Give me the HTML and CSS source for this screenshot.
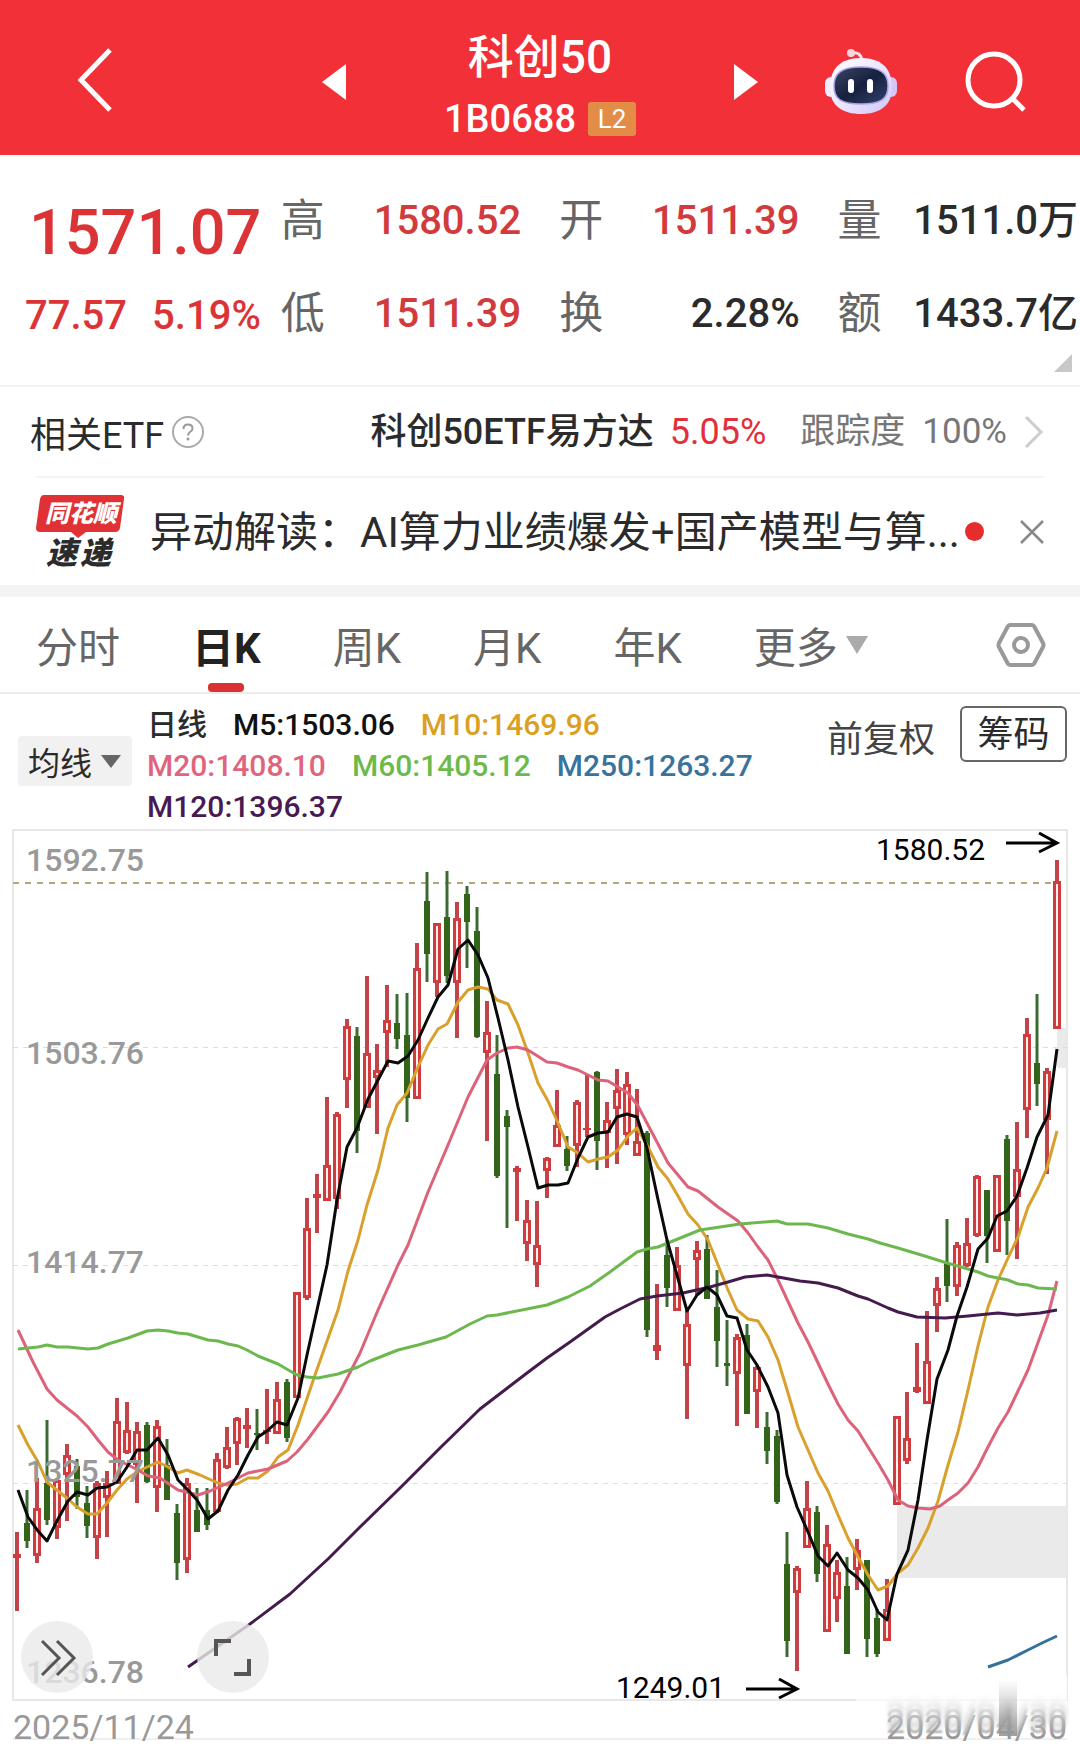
FILE: index.html
```html
<!DOCTYPE html>
<html lang="zh-CN">
<head>
<meta charset="utf-8">
<meta name="viewport" content="width=device-width, initial-scale=1">
<title>科创50 1B0688</title>
<link rel="stylesheet" href="styles.css">
</head>
<body>

<header class="topbar">
  <div class="topbar-left">
    <button class="icon-btn" type="button" aria-label="返回">
      <svg width="36" height="64" viewBox="0 0 36 64"><path d="M33 2 L4 32 L33 62" fill="none" stroke="#fff" stroke-width="5"/></svg>
    </button>
  </div>
  <div class="topbar-center">
    <button class="icon-btn" type="button" aria-label="上一个">
      <svg width="24" height="36" viewBox="0 0 24 36"><path d="M24 0 V36 L0 18 Z" fill="#fff"/></svg>
    </button>
    <div class="title">
      <h1>科创50</h1>
      <p>1B0688 <span class="level">L2</span></p>
    </div>
    <button class="icon-btn" type="button" aria-label="下一个">
      <svg width="24" height="36" viewBox="0 0 24 36"><path d="M0 0 V36 L24 18 Z" fill="#fff"/></svg>
    </button>
  </div>
  <div class="topbar-right">
    <button class="icon-btn" type="button" aria-label="智能助手">
      <svg width="72" height="68" viewBox="0 0 72 68">
        <defs>
          <linearGradient id="shell" x1="0" y1="0" x2="1" y2="1">
            <stop offset="0" stop-color="#fff"/>
            <stop offset="0.5" stop-color="#ece6ff"/>
            <stop offset="1" stop-color="#cfc6f6"/>
          </linearGradient>
          <linearGradient id="face" x1="0" y1="0" x2="1" y2="1">
            <stop offset="0" stop-color="#3c4664"/>
            <stop offset="0.5" stop-color="#16213f"/>
            <stop offset="1" stop-color="#34426a"/>
          </linearGradient>
        </defs>
        <path d="M26 5 Q36 3 37 13" fill="none" stroke="#fbdfe8" stroke-width="3"/>
        <circle cx="26" cy="5" r="4" fill="#fbd7dc"/>
        <rect x="0" y="29" width="12" height="20" rx="6" fill="#f3ecff"/>
        <rect x="60" y="29" width="12" height="20" rx="6" fill="#d5c6f6"/>
        <path d="M36 10 C58 10 67 22 67 40 C67 58 54 66 36 66 C18 66 5 58 5 40 C5 22 14 10 36 10 Z" fill="url(#shell)"/>
        <path d="M36 19 C55 19 63 25 63 38 C63 51 56 56 36 56 C16 56 9 51 9 38 C9 25 17 19 36 19 Z" fill="url(#face)" stroke="#a9a0e6" stroke-width="1.500"/>
        <rect x="23" y="31" width="6" height="14" rx="3" fill="#fff"/>
        <rect x="42" y="31" width="6" height="14" rx="3" fill="#fff"/>
      </svg>
    </button>
    <button class="icon-btn" type="button" aria-label="搜索">
      <svg width="62" height="62" viewBox="0 0 62 62"><circle cx="29" cy="29" r="26" fill="none" stroke="#fff" stroke-width="5"/><path d="M48 48 L59 59" stroke="#fff" stroke-width="5"/></svg>
    </button>
  </div>
</header>

<section class="quote">
  <div class="price">
    <strong>1571.07</strong>
    <div class="change"><span>77.57</span><span>5.19%</span></div>
  </div>
  <dl class="stats">
    <div><dt>高</dt><dd class="up">1580.52</dd></div>
    <div><dt>开</dt><dd class="up">1511.39</dd></div>
    <div><dt>量</dt><dd>1511.0万</dd></div>
    <div><dt>低</dt><dd class="up">1511.39</dd></div>
    <div><dt>换</dt><dd>2.28%</dd></div>
    <div><dt>额</dt><dd>1433.7亿</dd></div>
  </dl>
  <svg class="expand" width="18" height="18" viewBox="0 0 18 18"><path d="M18 0 V18 H0 Z" fill="#c8c8c8"/></svg>
</section>

<section class="etf">
  <span class="etf-label">相关ETF</span>
  <svg width="32" height="32" viewBox="0 0 32 32"><circle cx="16" cy="16" r="15" fill="none" stroke="#aaa" stroke-width="2"/><path d="M11.500 13 Q11.500 8.500 16 8.500 Q20.500 8.500 20.500 12.500 Q20.500 14.500 18 16 Q16 17.300 16 19.500" fill="none" stroke="#999" stroke-width="2"/><circle cx="16" cy="23" r="1.500" fill="#999"/></svg>
  <a class="etf-link" href="#">
    <b>科创50ETF易方达</b>
    <span class="etf-rate">5.05%</span>
    <span class="etf-track">跟踪度</span>
    <span class="etf-track">100%</span>
    <svg width="20" height="34" viewBox="0 0 20 34"><path d="M2 2 L17 17 L2 32" fill="none" stroke="#ccc" stroke-width="3"/></svg>
  </a>
</section>

<section class="news">
  <svg class="news-logo" width="90" height="74" viewBox="0 0 90 74">
    <path d="M8 0 H85 Q89 0 88 4 L84 33 Q83 37 79 37 H50 L42 43 L35 37 H4 Q0 37 0 33 L4 4 Q5 0 8 0 Z" fill="#e03234"/>
    <text x="9" y="27" font-size="24" fill="#fff">同花顺</text>
    <text x="10" y="69" font-size="31" fill="#2b2b2b">速</text>
    <text x="44" y="69" font-size="31" fill="#2b2b2b">递</text>
  </svg>
  <a class="news-text" href="#">异动解读：AI算力业绩爆发+国产模型与算...</a>
  <i class="dot"></i>
  <button class="icon-btn" type="button" aria-label="关闭">
    <svg width="24" height="24" viewBox="0 0 24 24"><path d="M1 1 L23 23 M23 1 L1 23" stroke="#888" stroke-width="2.500"/></svg>
  </button>
</section>

<nav class="tabs">
  <button type="button">分时</button>
  <button type="button" class="active">日K</button>
  <button type="button">周K</button>
  <button type="button">月K</button>
  <button type="button">年K</button>
  <button type="button" class="more">更多<svg width="22" height="18" viewBox="0 0 22 18"><path d="M0 0 H22 L11 18 Z" fill="#aaa"/></svg></button>
  <button type="button" class="settings" aria-label="设置">
    <svg width="50" height="46" viewBox="0 0 50 46"><path d="M14 3 H36 Q37.500 3 38.500 5 L47 21 Q48 23 47 25 L38.500 41 Q37.500 43 36 43 H14 Q12.500 43 11.500 41 L3 25 Q2 23 3 21 L11.500 5 Q12.500 3 14 3 Z" fill="none" stroke="#999" stroke-width="4"/><circle cx="25" cy="23" r="7" fill="none" stroke="#999" stroke-width="4"/></svg>
  </button>
</nav>

<section class="indicator">
  <button type="button" class="ma-btn">均线<svg width="20" height="13" viewBox="0 0 20 13"><path d="M0 0 H20 L10 13 Z" fill="#666"/></svg></button>
  <ul class="legend">
    <li class="day">日线</li>
    <li class="m5">M5:1503.06</li>
    <li class="m10">M10:1469.96</li>
    <li class="m20">M20:1408.10</li>
    <li class="m60">M60:1405.12</li>
    <li class="m250">M250:1263.27</li>
    <li class="m120">M120:1396.37</li>
  </ul>
  <button type="button" class="adjust">前复权</button>
  <button type="button" class="chips">筹码</button>
</section>

<figure class="chart">
  <svg id="kline" viewBox="0 830 1080 870" role="img" aria-label="日K线图">
    <g fill="#eaeaea">
      <rect x="897" y="1506" width="170" height="72"/>
      <rect x="1057" y="1028" width="10" height="40"/>
    </g>
    <rect x="13" y="830" width="1054" height="870" fill="none" stroke="#e8e8e8" stroke-width="2"/>
    <g stroke="#dcdcdc" stroke-dasharray="5 5">
      <path d="M13 1047.500 H1067"/>
      <path d="M13 1265.500 H1067"/>
      <path d="M13 1483.500 H1067"/>
    </g>
    <path d="M13 883 H1054" stroke="#b5a878" stroke-width="2" stroke-dasharray="6 6"/>
    <g id="candles"></g>
    <g id="averages" fill="none" stroke-width="3" stroke-linejoin="round"></g>
    <g class="scale">
      <text x="26" y="871">1592.75</text>
      <text x="26" y="1064">1503.76</text>
      <text x="26" y="1273">1414.77</text>
      <text x="26" y="1482">1325.77</text>
      <text x="26" y="1683">1236.78</text>
    </g>
    <g class="mark">
      <text x="876" y="860">1580.52</text>
      <text x="616" y="1698">1249.01</text>
    </g>
    <g fill="none" stroke="#000" stroke-width="3">
      <path d="M1006 843 H1056 M1039 833 L1057 843 L1039 852"/>
      <path d="M746 1689 H796 M779 1679 L797 1689 L779 1698"/>
    </g>
  </svg>
  <div class="chart-tools">
    <button type="button" aria-label="展开">
      <svg width="72" height="72" viewBox="0 0 72 72"><path d="M21 20 L38 37 L21 54 M36 20 L53 37 L36 54" fill="none" stroke="#555" stroke-width="3"/></svg>
    </button>
    <button type="button" aria-label="全屏">
      <svg width="72" height="72" viewBox="0 0 72 72"><path d="M19 35 V20 H34 M52 38 V53 H37" fill="none" stroke="#555" stroke-width="4"/></svg>
    </button>
  </div>
</figure>

<footer class="dates">
  <span>2025/11/24</span>
  <span class="fading">2020/04/30</span>
</footer>

<script src="chart.js"></script>
</body>
</html>
```
FILE: styles.css
```css
* {
  box-sizing: border-box;
}

body {
  margin: 0;
  background: #fff;
  color: #2b2b2b;
  font-family: Roboto, "Noto Sans CJK SC", sans-serif;
  overflow-x: hidden;
}

button {
  margin: 0;
  padding: 0;
  border: 0;
  background: none;
  color: inherit;
  font: inherit;
}

a {
  color: inherit;
  text-decoration: none;
}

svg {
  display: block;
  flex: none;
}

h1, p, dl, dd, ul, figure {
  margin: 0;
  padding: 0;
}

/* top bar */
.topbar {
  display: grid;
  grid-template-columns: 1fr auto 1fr;
  align-items: center;
  height: 155px;
  padding-top: 9px;
  background: #f23037;
  color: #fff;
}

.topbar-left {
  padding-left: 77px;
}

.topbar-center {
  display: flex;
  align-items: center;
  justify-content: space-between;
  width: 436px;
}

.topbar-right {
  display: flex;
  align-items: center;
  justify-content: flex-end;
  gap: 68px;
  padding-right: 53px;
}

.title {
  padding-top: 10px;
  text-align: center;
}

.title h1 {
  font-size: 46px;
  font-weight: 500;
  line-height: 64px;
}

.title p {
  display: flex;
  align-items: center;
  gap: 12px;
  font-size: 38px;
  font-weight: 500;
  line-height: 60px;
}

.level {
  width: 48px;
  background: #e28c48;
  border-radius: 3px;
  font-size: 26px;
  font-weight: 400;
  line-height: 34px;
}

/* quote */
.quote {
  position: relative;
  display: flex;
  height: 232px;
  padding-top: 19px;
  border-bottom: 2px solid #f3f3f3;
}

.price {
  width: 26%;
  padding-left: 25px;
  color: #dc3336;
}

.price strong {
  display: block;
  padding-left: 4px;
  font-size: 63px;
  font-weight: 500;
  line-height: 118px;
}

.change {
  display: flex;
  gap: 25px;
  font-size: 40px;
  font-weight: 500;
  line-height: 48px;
}

.stats {
  flex: 1;
  display: grid;
  grid-template-columns: repeat(3, 1fr);
  grid-auto-rows: 93px;
  column-gap: 38px;
  padding-right: 2px;
}

.stats div {
  display: flex;
  align-items: center;
  justify-content: space-between;
  line-height: 60px;
}

.stats dt {
  color: #666;
  font-size: 44px;
}

.stats dd {
  font-size: 40px;
  font-weight: 500;
}

.stats .up {
  color: #d33a3c;
}

.expand {
  position: absolute;
  right: 8px;
  bottom: 13px;
}

/* related etf */
.etf {
  display: flex;
  align-items: center;
  height: 91px;
  margin: 0 36px;
  border-bottom: 2px solid #f3f3f3;
  font-size: 36px;
}

.etf-label {
  margin: 0 8px 0 -6px;
}

.etf-link {
  display: flex;
  align-items: center;
  margin-left: auto;
  line-height: 56px;
}

.etf-link b {
  font-weight: 500;
}

.etf-rate {
  margin: 0 34px 0 16px;
  color: #e0303c;
}

.etf-track {
  margin-right: 17px;
  color: #777;
  font-size: 35px;
}

/* news */
.news {
  display: flex;
  align-items: center;
  height: 119px;
  padding: 0 36px;
  border-bottom: 12px solid #f4f4f4;
}

.news-logo {
  overflow: visible;
  font-weight: 900;
  font-style: italic;
}

.news-text {
  flex: 1;
  margin-left: 24px;
  padding-top: 3px;
  font-size: 42px;
  line-height: 62px;
  white-space: nowrap;
}

.dot {
  flex: none;
  width: 19px;
  height: 19px;
  margin: 0 36px 0 5px;
  border-radius: 50%;
  background: #e52d2e;
}

/* period tabs */
.tabs {
  display: flex;
  gap: 72px;
  height: 97px;
  padding: 0 34px 0 36px;
  border-bottom: 2px solid #ececec;
  color: #666;
  font-size: 42px;
}

.tabs button {
  display: flex;
  align-items: center;
}

.tabs .active {
  position: relative;
  color: #222;
  font-weight: 700;
}

.tabs .active::after {
  content: "";
  position: absolute;
  left: 16px;
  bottom: 0;
  width: 36px;
  height: 9px;
  border-radius: 4px;
  background: #dc3033;
}

.tabs .more {
  gap: 8px;
}

.tabs .settings {
  margin-left: auto;
}

/* indicator legend */
.indicator {
  display: flex;
  align-items: flex-start;
  height: 136px;
  padding: 10px 13px 0 18px;
}

.ma-btn {
  display: flex;
  align-items: center;
  gap: 9px;
  width: 114px;
  height: 50px;
  margin-top: 32px;
  padding-left: 10px;
  border-radius: 4px;
  background: #f1f1f1;
  font-size: 32px;
}

.legend {
  display: flex;
  flex-wrap: wrap;
  column-gap: 26px;
  flex: 1;
  margin-left: 15px;
  padding-right: 60px;
  list-style: none;
  font-size: 30px;
  font-weight: 500;
  line-height: 41px;
}

.m5 { color: #111; }
.m10 { color: #dba021; }
.m20 { color: #e0657c; }
.m60 { color: #6cba4b; }
.m250 { color: #37739c; }
.m120 { color: #481a54; }

/* the first row holds three entries only */
.m10 {
  margin-right: 100px;
}

.adjust {
  margin-right: 25px;
  color: #444;
  font-size: 36px;
  line-height: 72px;
}

.chips {
  width: 107px;
  height: 56px;
  margin-top: 2px;
  border: 2px solid #666;
  border-radius: 6px;
  font-size: 36px;
  line-height: 54px;
}

/* chart */
.chart {
  position: relative;
}

#kline {
  width: 100%;
  height: auto;
  overflow: visible;
}

.scale {
  fill: #999;
  font-size: 32px;
  font-weight: 500;
}

.mark {
  fill: #000;
  font-size: 30px;
}

.chart-tools {
  position: absolute;
  left: 21px;
  bottom: 7px;
  display: flex;
  gap: 104px;
}

.chart-tools button {
  border-radius: 50%;
  background: rgba(234, 234, 234, 0.8);
}

.dates {
  display: flex;
  justify-content: space-between;
  height: 48px;
  padding: 0 13px;
  color: #999;
  font-size: 34px;
  line-height: 54px;
  background: linear-gradient(#f0f0f0, #f0f0f0) 13px 38px / 1054px 2px no-repeat;
}

.fading {
  position: relative;
  text-shadow: 0 -6px 2px #aaa, 0 -12px 4px #bbb, 0 -18px 5px #ddd;
}

.fading::before {
  content: "";
  position: absolute;
  inset: -24px 0 12px -30px;
  background: linear-gradient(rgba(255, 255, 255, 0.9) 20%, rgba(255, 255, 255, 0));
}

.fading::after {
  content: "";
  position: absolute;
  right: 50px;
  top: -20px;
  width: 18px;
  height: 56px;
  background: linear-gradient(rgba(150, 150, 150, 0), rgba(150, 150, 150, 0.9));
}
```
FILE: chart.js
```js
// One row per day: high, body top, body bottom, low, 1 = up / 0 = down
var days = [
  [1532,1554,1558,1611,1], [1490,1523,1541,1548,0], [1478,1508,1556,1563,1], [1420,1483,1520,1525,0],
  [1478,1480,1528,1539,1], [1444,1455,1475,1521,1], [1459,1466,1497,1509,0], [1486,1503,1526,1538,0],
  [1481,1483,1538,1559,1], [1471,1483,1498,1537,1], [1398,1421,1484,1484,1], [1402,1430,1453,1454,1],
  [1422,1431,1465,1503,1], [1422,1425,1482,1483,0], [1420,1426,1488,1512,1], [1439,1465,1500,1500,0],
  [1504,1513,1563,1580,0], [1478,1483,1560,1573,1], [1488,1510,1532,1532,0], [1488,1510,1525,1530,0],
  [1453,1459,1512,1513,1], [1427,1447,1468,1469,1], [1417,1418,1444,1465,1], [1408,1425,1429,1448,1],
  [1409,1433,1435,1450,0], [1389,1430,1432,1444,1], [1382,1399,1434,1434,1], [1379,1382,1438,1442,0],
  [1292,1292,1398,1398,1], [1198,1228,1298,1300,1], [1174,1194,1198,1233,1], [1097,1165,1201,1201,1],
  [1112,1114,1199,1209,1], [1019,1026,1080,1108,1], [1027,1036,1131,1153,0], [976,1053,1108,1108,1],
  [1044,1070,1078,1134,1], [985,1020,1033,1067,1], [994,1023,1039,1049,0], [993,1035,1098,1122,0],
  [943,968,1099,1099,1], [872,901,954,982,0], [923,923,983,997,1], [871,917,976,983,0],
  [902,918,983,1038,1], [886,894,922,968,0], [907,931,1037,1038,0], [1001,1032,1053,1141,1],
  [1035,1074,1176,1178,0], [1110,1116,1127,1228,0], [1166,1168,1172,1221,1], [1200,1220,1244,1261,1],
  [1201,1245,1265,1287,1], [1157,1158,1171,1198,1], [1090,1125,1147,1147,1], [1136,1149,1166,1171,0],
  [1100,1102,1146,1167,1], [1075,1128,1130,1137,1], [1071,1072,1141,1170,0], [1102,1120,1133,1168,1],
  [1069,1090,1109,1164,1], [1072,1084,1135,1145,1], [1089,1141,1156,1156,1], [1131,1133,1330,1337,0],
  [1284,1345,1351,1360,1], [1240,1255,1288,1307,0], [1247,1265,1311,1311,1], [1310,1324,1366,1419,1],
  [1241,1250,1260,1295,1], [1235,1249,1299,1299,0], [1270,1307,1341,1367,0], [1320,1363,1366,1386,0],
  [1334,1337,1374,1426,1], [1324,1335,1414,1414,0], [1366,1367,1392,1428,1], [1412,1427,1451,1464,0],
  [1430,1436,1502,1504,0], [1532,1564,1641,1657,0], [1566,1568,1593,1671,1], [1481,1508,1548,1548,1],
  [1506,1512,1574,1582,0], [1525,1544,1632,1632,1], [1560,1572,1599,1622,1], [1557,1586,1654,1654,0],
  [1539,1550,1570,1590,1], [1560,1560,1639,1657,0], [1609,1618,1654,1657,0], [1579,1609,1641,1641,1],
  [1416,1416,1505,1505,1], [1392,1438,1461,1464,1], [1343,1387,1392,1393,1], [1311,1361,1404,1404,1],
  [1277,1288,1306,1332,1], [1219,1263,1286,1302,0], [1242,1245,1287,1296,1], [1218,1243,1266,1267,1],
  [1175,1176,1236,1237,1], [1190,1190,1236,1263,0], [1175,1175,1252,1252,1], [1135,1139,1221,1255,0],
  [1122,1169,1197,1259,1], [1018,1034,1110,1138,1], [994,1063,1084,1106,0], [1068,1071,1120,1174,1],
  [860,881,1029,1029,1]
];

var averages = {
  '#d9a02c': '18,1425 28,1445 38,1462 47,1482 58,1491 68,1499 77,1507 88,1514 97,1514 107,1503 117,1490 127,1479 137,1472 147,1467 158,1462 168,1467 178,1473 187,1470 200,1475 218,1483 228,1485 237,1484 248,1478 258,1478 268,1471 278,1457 288,1450 298,1425 315,1375 338,1310 348,1271 358,1240 367,1205 378,1170 388,1128 397,1105 407,1093 418,1067 428,1045 438,1029 447,1024 458,1002 468,990 478,987 488,989 497,1000 508,1004 518,1025 528,1053 538,1083 548,1101 558,1123 568,1147 578,1153 588,1162 598,1159 608,1157 618,1150 628,1136 637,1128 648,1147 658,1167 668,1179 678,1196 688,1214 698,1225 708,1240 718,1265 728,1290 737,1310 748,1319 758,1321 768,1337 778,1360 788,1393 798,1427 808,1450 818,1473 828,1491 838,1515 848,1538 857,1555 868,1575 878,1590 888,1586 898,1573 908,1565 918,1548 928,1528 938,1501 948,1465 958,1432 968,1390 978,1346 988,1307 998,1280 1008,1258 1018,1237 1028,1207 1038,1188 1047,1168 1057,1131',
  '#dc637a': '18,1330 33,1362 47,1389 57,1400 77,1416 88,1427 98,1440 108,1452 118,1460 138,1470 148,1476 160,1478 178,1490 198,1495 210,1491 228,1483 248,1473 268,1469 287,1461 297,1452 308,1439 328,1412 340,1392 360,1353 378,1310 398,1265 408,1245 428,1192 448,1145 468,1097 487,1060 497,1053 508,1048 517,1047 528,1050 547,1062 557,1063 568,1067 578,1070 598,1080 608,1081 618,1087 628,1093 638,1106 648,1125 668,1163 688,1187 698,1191 718,1207 738,1221 748,1233 758,1247 768,1260 778,1280 798,1323 808,1342 828,1384 838,1404 848,1420 858,1431 868,1447 878,1463 888,1480 898,1500 908,1506 918,1508 930,1509 940,1506 948,1500 958,1493 968,1483 978,1467 988,1447 998,1428 1008,1412 1028,1370 1048,1315 1057,1281',
  '#6cb84e': '18,1349 38,1347 47,1345 57,1347 68,1347 88,1349 98,1348 108,1344 128,1338 147,1331 158,1330 168,1331 178,1333 188,1334 208,1340 218,1341 228,1344 238,1346 247,1350 258,1356 278,1364 297,1375 307,1377 318,1378 338,1374 358,1367 370,1361 398,1350 418,1345 446,1337 470,1324 487,1316 497,1315 547,1305 568,1297 590,1286 610,1272 637,1252 647,1249 658,1247 668,1243 700,1230 720,1227 740,1224 777,1221 787,1224 808,1224 828,1228 848,1234 868,1239 880,1243 898,1248 928,1257 947,1263 968,1269 978,1272 988,1276 1008,1280 1018,1284 1028,1285 1038,1288 1057,1289',
  '#451b4d': '188,1667 250,1624 290,1594 328,1559 360,1527 400,1488 440,1448 480,1409 510,1386 527,1373 547,1358 570,1342 605,1317 620,1309 640,1299 657,1296 683,1293 710,1287 728,1282 745,1277 767,1275 778,1277 800,1281 818,1283 838,1288 858,1296 868,1299 888,1308 898,1312 917,1317 945,1318 968,1316 998,1313 1017,1315 1040,1313 1057,1310',
  '#35719b': '988,1667 1008,1660 1028,1650 1042,1643 1057,1636',
  '#0a0a0a': '18,1490 28,1517 38,1531 47,1541 58,1519 68,1501 77,1492 88,1495 97,1488 107,1487 117,1482 127,1467 137,1450 147,1450 158,1438 168,1455 178,1480 187,1489 197,1500 208,1519 218,1511 228,1490 238,1475 248,1455 258,1437 267,1431 277,1422 287,1425 298,1398 307,1355 327,1265 337,1200 347,1147 357,1128 368,1099 378,1080 388,1061 398,1063 408,1056 418,1040 428,1018 438,997 448,985 458,949 468,940 478,955 488,978 498,1018 508,1060 518,1107 528,1147 538,1188 548,1185 558,1185 568,1183 578,1158 588,1137 598,1133 608,1132 617,1117 627,1114 637,1117 647,1148 657,1195 667,1240 677,1275 687,1311 697,1295 707,1287 717,1295 727,1316 737,1318 747,1350 757,1365 768,1387 778,1413 787,1475 797,1507 808,1532 818,1556 828,1566 837,1553 848,1570 858,1578 868,1590 878,1612 887,1620 897,1574 908,1550 918,1500 927,1440 937,1379 948,1350 957,1316 967,1287 978,1249 988,1238 997,1216 1007,1211 1017,1196 1027,1168 1037,1137 1048,1115 1057,1049'
};

function add(parent, name, attrs) {
  var el = document.createElementNS('http://www.w3.org/2000/svg', name);
  for (var key in attrs) el.setAttribute(key, attrs[key]);
  parent.appendChild(el);
}

var candles = document.getElementById('candles');
days.forEach(function (d, i) {
  var x = 17 + i * 10, up = d[4], height = d[2] - d[1];
  add(candles, 'path', {
    d: 'M' + x + ' ' + d[0] + 'V' + d[3],
    stroke: up ? '#c0444a' : '#3b6b30',
    'stroke-width': up ? 4 : 3
  });
  if (up && height > 6) {
    // hollow body
    add(candles, 'rect', {
      x: x - 2.5, y: d[1] + 1.5, width: 5, height: height - 3,
      fill: '#fff0ee', stroke: '#d03c3e', 'stroke-width': 3
    });
  } else {
    add(candles, 'rect', {
      x: up ? x - 4 : x - 3, y: d[1], width: up ? 8 : 6, height: height,
      fill: up ? '#d03c3e' : '#34641a'
    });
  }
});

for (var color in averages) {
  add(document.getElementById('averages'), 'polyline', { points: averages[color], stroke: color });
}
```
